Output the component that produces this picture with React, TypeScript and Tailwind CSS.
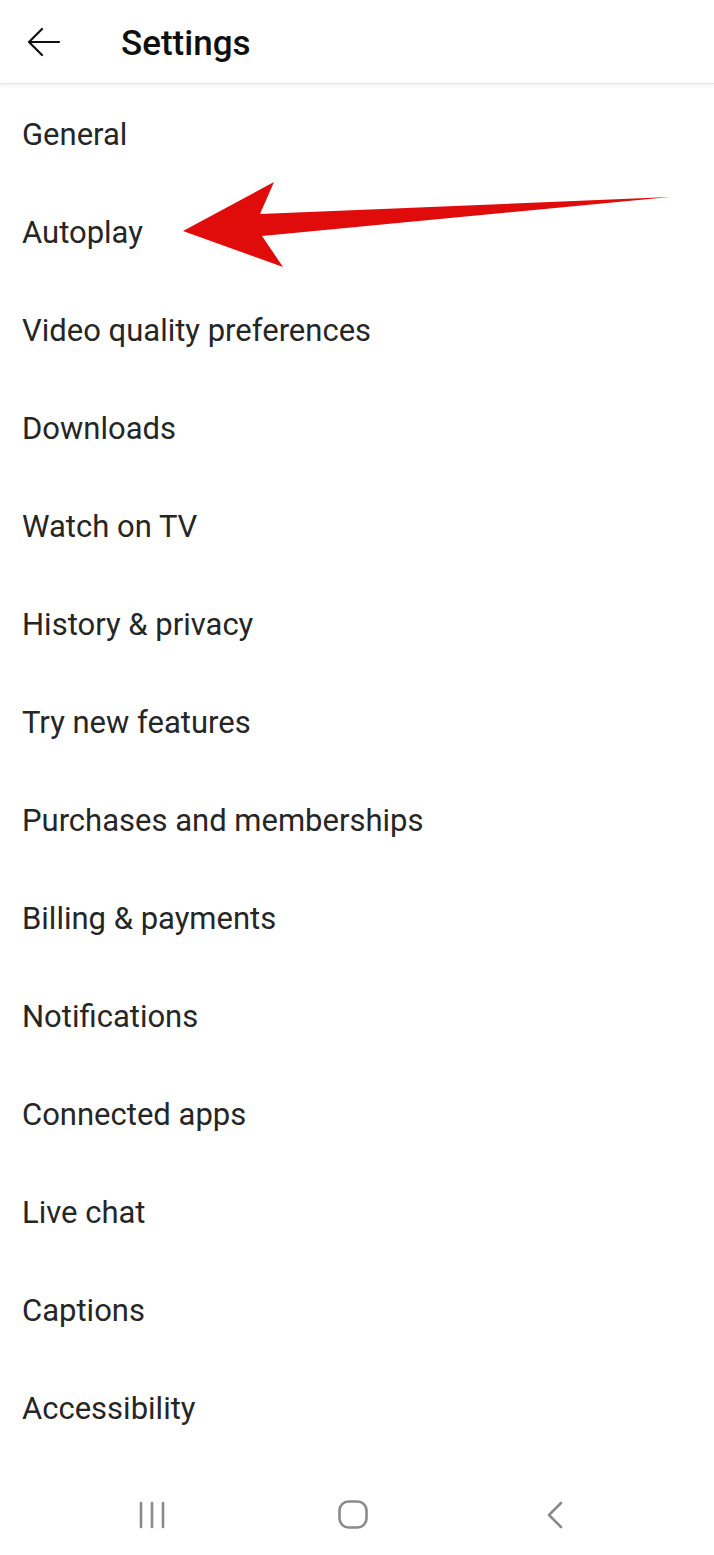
import React from "react";

const items = [
  "General",
  "Autoplay",
  "Video quality preferences",
  "Downloads",
  "Watch on TV",
  "History & privacy",
  "Try new features",
  "Purchases and memberships",
  "Billing & payments",
  "Notifications",
  "Connected apps",
  "Live chat",
  "Captions",
  "Accessibility",
];

function BackArrow() {
  return (
    <svg width="34" height="30" viewBox="0 0 34 30" fill="none" stroke="#0f0f0f" strokeWidth="2.2" strokeLinecap="round" strokeLinejoin="round">
      <path d="M32 15H3" />
      <path d="M15 2L2 15l13 13" />
    </svg>
  );
}

function RedArrow() {
  return (
    <svg className="absolute left-0 top-0 pointer-events-none" width="714" height="300" viewBox="0 0 714 300">
      <polygon points="183,231 274,182 260,214 670,197 262,236 283,267" fill="#e00b0b" />
    </svg>
  );
}

export default function App() {
  return (
    <div className="relative w-[714px] h-[1555px] bg-white flex flex-col overflow-hidden" style={{ fontFamily: "Roboto, 'Noto Sans', sans-serif" }}>
      <header className="h-[84px] shrink-0 flex items-center border-b border-[#e3e3e3] shadow-[0_2px_4px_rgba(0,0,0,0.06)] relative z-10">
        <div className="w-[121px] pl-[27px] flex items-center">
          <BackArrow />
        </div>
        <h1 className="text-[35px] font-medium text-[#0f0f0f] leading-none pt-[3px]">Settings</h1>
      </header>

      <ul className="flex flex-col">
        {items.map((item) => (
          <li key={item} className="h-[98px] flex items-center pl-[22px] pt-[2px] text-[31px] text-[#262626] leading-none">
            {item}
          </li>
        ))}
      </ul>

      <div className="flex-1" />

      <nav className="h-[80px] shrink-0 flex items-center">
        <svg className="ml-[137px]" width="30" height="28" viewBox="0 0 30 28" fill="none" stroke="#8a8a8a" strokeWidth="2.6" strokeLinecap="round">
          <path d="M4 2v24M15 2v24M26 2v24" />
        </svg>
        <svg className="ml-[171px]" width="30" height="30" viewBox="0 0 30 30" fill="none" stroke="#8a8a8a" strokeWidth="2.6">
          <rect x="1.5" y="1.5" width="27" height="26" rx="9" />
        </svg>
        <svg className="ml-[177px]" width="20" height="30" viewBox="0 0 20 30" fill="none" stroke="#8a8a8a" strokeWidth="2.6" strokeLinecap="round" strokeLinejoin="round">
          <path d="M16 3L4 15l12 12" />
        </svg>
      </nav>

      <RedArrow />
    </div>
  );
}
